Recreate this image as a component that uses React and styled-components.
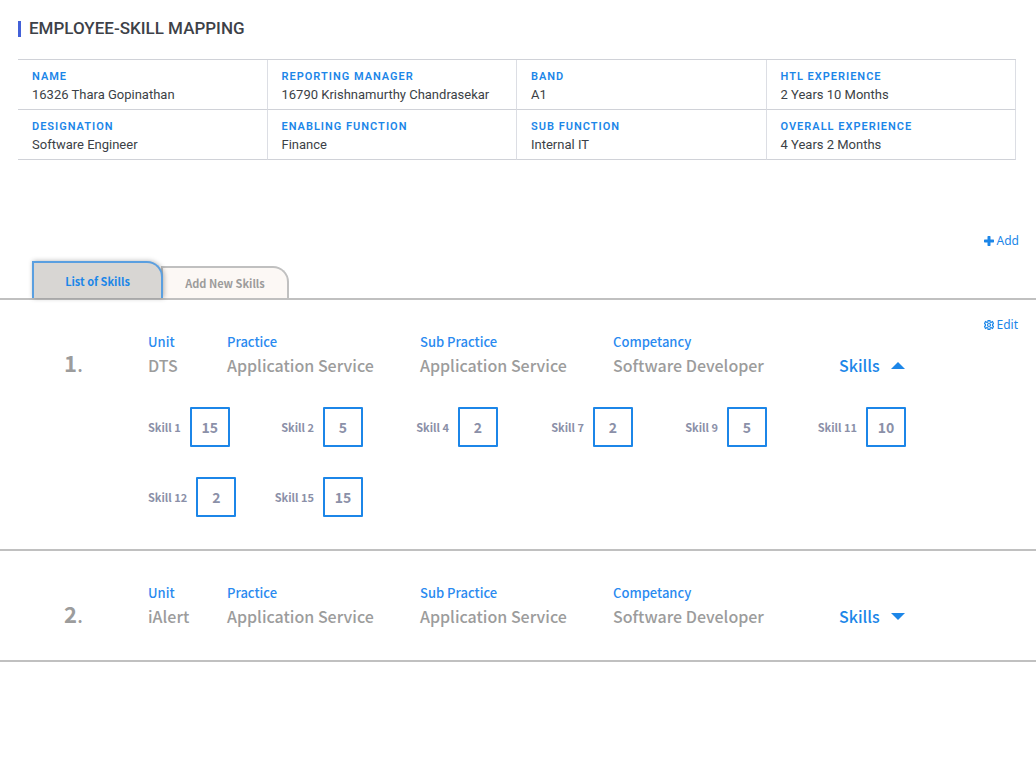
import React, { useId, useState } from "react";
import styled, { createGlobalStyle } from "styled-components";

const blue = "#1c86e8";
const labelBlue = "#2a8af0";
const humanist = '"Noto Sans CJK SC", "Noto Sans", sans-serif';

const GlobalStyle = createGlobalStyle`
  *, *::before, *::after { box-sizing: border-box; }
  body {
    margin: 0;
    background: #fff;
    color: #3b3f46;
    font-family: Roboto, sans-serif;
  }
  button, input { font: inherit; }
`;

const Header = styled.header`
  padding: 20px 20px 22px 18px;
`;

const Title = styled.h1`
  display: flex;
  align-items: center;
  gap: 8px;
  margin: 0;
  font-size: 17px;
  line-height: 17px;
  font-weight: 500;
  color: #3d4148;
  &::before {
    content: "";
    width: 3px;
    height: 16px;
    background: #4361d8;
  }
`;

const Profile = styled.dl`
  display: grid;
  grid-template-columns: repeat(4, 1fr);
  margin: 0 20px 0 18px;
  border-top: 1px solid #d0d2d8;
`;

const ProfileCell = styled.div`
  min-height: 50px;
  padding: 8px 14px 4px;
  border-right: 1px solid #dcdee4;
  border-bottom: 1px solid #d0d2d8;
`;

const ProfileLabel = styled.dt`
  font-size: 11px;
  line-height: 17px;
  font-weight: 600;
  letter-spacing: 1px;
  color: ${blue};
  text-transform: uppercase;
`;

const ProfileValue = styled.dd`
  margin: 0;
  font-size: 13px;
  line-height: 20px;
`;

const LinkButton = styled.button`
  display: inline-flex;
  align-items: center;
  gap: 3px;
  padding: 0;
  border: 0;
  background: none;
  color: ${blue};
  font-family: "Noto Sans", sans-serif;
  font-size: 12px;
  line-height: 16px;
  cursor: pointer;
`;

const PageActions = styled.div`
  display: flex;
  justify-content: flex-end;
  padding: 73px 17px 12px;
`;

const Tabs = styled.div`
  display: flex;
  align-items: flex-end;
  padding-left: 32px;
  border-bottom: 2px solid #c0c0c0;
`;

const Tab = styled.button`
  position: relative;
  z-index: ${(p) => (p.$active ? 1 : 0)};
  width: ${(p) => (p.$active ? 131 : 128)}px;
  height: ${(p) => (p.$active ? 37 : 32)}px;
  margin-left: ${(p) => (p.$active ? 0 : -2)}px;
  padding: 0;
  border: 2px solid ${(p) => (p.$active ? "#5a9fe0" : "#c0c0c0")};
  border-bottom: 0;
  border-radius: 0 16px 0 0;
  background: ${(p) => (p.$active ? "#d8d6d3" : "#fcf8f5")};
  box-shadow: ${(p) => (p.$active ? "1px 0 5px rgba(0, 0, 0, 0.3)" : "none")};
  color: ${(p) => (p.$active ? blue : "#9c9c9c")};
  font-family: ${humanist};
  font-size: 11px;
  line-height: 18px;
  font-weight: 700;
  cursor: pointer;
`;

const Entry = styled.section`
  padding: 17px 18px 30px 64px;
  border-bottom: 2px solid #c0c0c0;
`;

const EntryActions = styled.div`
  display: flex;
  justify-content: flex-end;
  min-height: 16px;
`;

const EntryGrid = styled.div`
  display: grid;
  grid-template-columns: 84px 79px 193px 193px 226px 1fr;
  align-items: end;
`;

const EntryNumber = styled.div`
  font-family: ${humanist};
  color: #9c9c9c;
  font-size: 22px;
  line-height: 34px;
  font-weight: 400;
  strong { font-weight: 700; }
`;

const Field = styled.div`
  font-family: ${humanist};
`;

const FieldLabel = styled.div`
  font-size: 13px;
  line-height: 18px;
  font-weight: 500;
  color: ${labelBlue};
`;

const FieldValue = styled.div`
  font-size: 16px;
  line-height: 28px;
  font-weight: 500;
  color: #9c9c9c;
`;

const SkillsToggle = styled.button`
  display: inline-flex;
  align-items: center;
  justify-self: start;
  gap: 11px;
  padding: 0;
  border: 0;
  background: none;
  color: ${blue};
  font-family: ${humanist};
  font-size: 16px;
  line-height: 28px;
  font-weight: 500;
  cursor: pointer;
`;

const SkillGrid = styled.div`
  display: grid;
  grid-template-columns: 89px 126px 135px 135px 134px 139px;
  row-gap: 30px;
  padding: 28px 0 2px 84px;
`;

const Skill = styled.div`
  display: flex;
  align-items: center;
  justify-content: flex-end;
  gap: 9px;
  &:nth-child(6n + 1) { justify-content: flex-start; }
`;

const SkillLabel = styled.label`
  font-family: ${humanist};
  font-size: 11px;
  line-height: 18px;
  font-weight: 700;
  color: #8b90a8;
  white-space: nowrap;
`;

const SkillInput = styled.input`
  width: 40px;
  height: 40px;
  padding: 0;
  border: 2px solid ${blue};
  border-radius: 1px;
  background: #fff;
  text-align: center;
  font-family: ${humanist};
  font-size: 14px;
  font-weight: 700;
  color: #8b90a8;
`;

const PlusIcon = () => (
  <svg width="10" height="10" viewBox="0 0 20 20" aria-hidden="true">
    <path d="M8 0h4l1 1v6h6l1 1v4l-1 1h-6v6l-1 1H8l-1-1v-6H1l-1-1V8l1-1h6V1Z" fill="currentColor" />
  </svg>
);

const GearIcon = () => (
  <svg width="10" height="10" viewBox="0 0 20 20" fill="none" stroke="currentColor" strokeWidth="2.4" strokeLinejoin="round" aria-hidden="true">
    <path d="M8 1h4v3l2 1 3-2 2 4-2 2v2l2 2-2 4-3-2-2 1v3H8v-3l-2-1-3 2-2-4 2-2V9L1 7l2-4 3 2 2-1Z" />
    <circle cx="10" cy="10" r="3" />
  </svg>
);

const Caret = ({ up }) => (
  <svg width="14" height="8" viewBox="0 0 14 8" aria-hidden="true">
    <path d={up ? "M0 8 7 1l7 7Z" : "M0 1h14L7 8Z"} fill="currentColor" />
  </svg>
);

const profile = [
  ["Name", "16326 Thara Gopinathan"],
  ["Reporting Manager", "16790 Krishnamurthy Chandrasekar"],
  ["Band", "A1"],
  ["HTL Experience", "2 Years 10 Months"],
  ["Designation", "Software Engineer"],
  ["Enabling Function", "Finance"],
  ["Sub Function", "Internal IT"],
  ["Overall Experience", "4 Years 2 Months"],
];

const skills = [
  ["Skill 1", 15],
  ["Skill 2", 5],
  ["Skill 4", 2],
  ["Skill 7", 2],
  ["Skill 9", 5],
  ["Skill 11", 10],
  ["Skill 12", 2],
  ["Skill 15", 15],
];

function SkillField({ name, value }) {
  const id = useId();
  return (
    <Skill>
      <SkillLabel htmlFor={id}>{name}</SkillLabel>
      <SkillInput id={id} type="text" defaultValue={value} />
    </Skill>
  );
}

function SkillEntry({ number, unit, initiallyOpen, editable }) {
  const [open, setOpen] = useState(initiallyOpen);
  const fields = [
    ["Unit", unit],
    ["Practice", "Application Service"],
    ["Sub Practice", "Application Service"],
    ["Competancy", "Software Developer"],
  ];
  return (
    <Entry>
      <EntryActions>
        {editable && (
          <LinkButton type="button">
            <GearIcon />
            Edit
          </LinkButton>
        )}
      </EntryActions>
      <EntryGrid>
        <EntryNumber>
          <strong>{number}</strong>.
        </EntryNumber>
        {fields.map(([label, value]) => (
          <Field key={label}>
            <FieldLabel>{label}</FieldLabel>
            <FieldValue>{value}</FieldValue>
          </Field>
        ))}
        <SkillsToggle type="button" aria-expanded={open} onClick={() => setOpen(!open)}>
          Skills
          <Caret up={open} />
        </SkillsToggle>
      </EntryGrid>
      {open && (
        <SkillGrid>
          {skills.map(([name, value]) => (
            <SkillField key={name} name={name} value={value} />
          ))}
        </SkillGrid>
      )}
    </Entry>
  );
}

export default function App() {
  return (
    <>
      <GlobalStyle />
      <Header>
        <Title>EMPLOYEE-SKILL MAPPING</Title>
      </Header>
      <main>
        <Profile>
          {profile.map(([label, value]) => (
            <ProfileCell key={label}>
              <ProfileLabel>{label}</ProfileLabel>
              <ProfileValue>{value}</ProfileValue>
            </ProfileCell>
          ))}
        </Profile>
        <PageActions>
          <LinkButton type="button">
            <PlusIcon />
            Add
          </LinkButton>
        </PageActions>
        <Tabs role="tablist">
          <Tab type="button" role="tab" aria-selected="true" $active>
            List of Skills
          </Tab>
          <Tab type="button" role="tab" aria-selected="false">
            Add New Skills
          </Tab>
        </Tabs>
        <SkillEntry number={1} unit="DTS" initiallyOpen editable />
        <SkillEntry number={2} unit="iAlert" initiallyOpen={false} />
      </main>
    </>
  );
}
